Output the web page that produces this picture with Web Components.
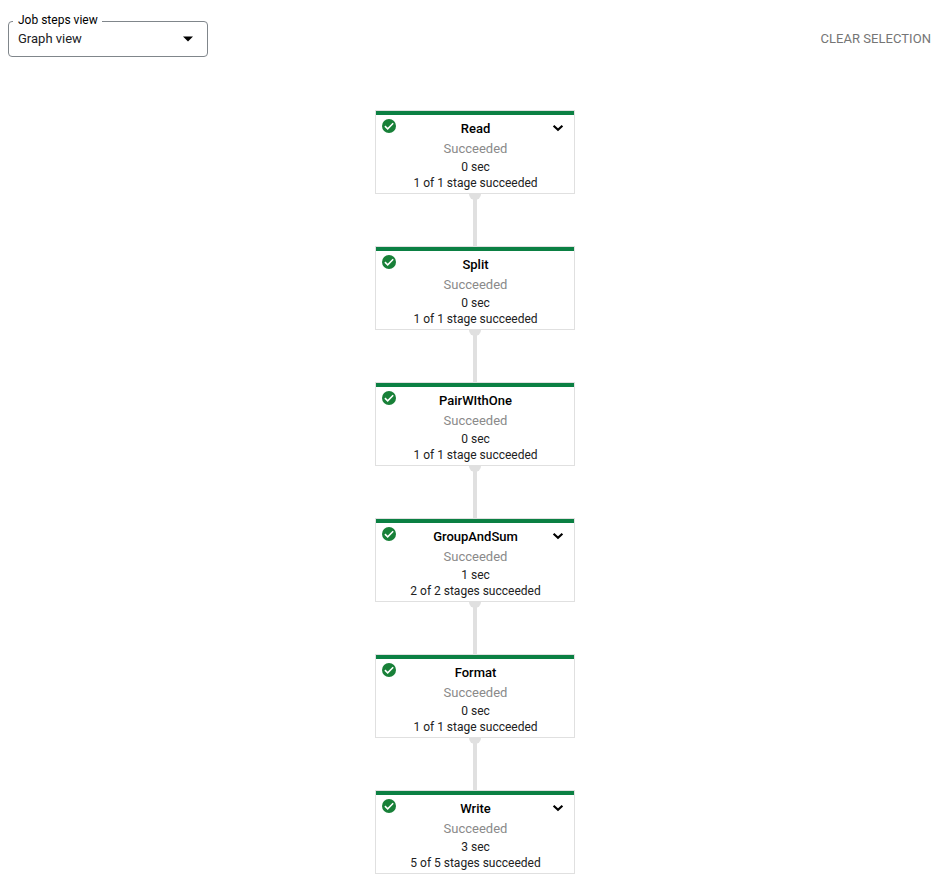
<!DOCTYPE html>
<html lang="en">
<head>
<meta charset="utf-8">
<title>Job steps</title>
<style>
body { margin: 0; background: #fff; font-family: Roboto, "Liberation Sans", sans-serif; color: #000; }
</style>
</head>
<body>
<job-page></job-page>
<script>
class BaseElement extends HTMLElement {
  constructor() {
    super();
    this.attachShadow({ mode: "open" });
  }
  connectedCallback() {
    this.shadowRoot.innerHTML = this.render();
  }
}

class ViewSelect extends BaseElement {
  render() {
    return `<style>
      :host { display: block; width: 200px; }
      fieldset { box-sizing: border-box; height: 44px; margin: 0; padding: 0 13px 0 9px; border: 1px solid #80868b; border-radius: 4px; min-width: 0; }
      legend { margin-left: -5px; padding: 0 4px 2px 5px; font-size: 12px; line-height: 14px; font-weight: 400; white-space: nowrap; }
      .value { display: flex; align-items: center; justify-content: space-between; height: 20px; font-size: 13px; line-height: 20px; color: #202124; }
      svg { display: block; }
    </style>
    <fieldset>
      <legend><slot name="label"></slot></legend>
      <div class="value"><slot></slot><svg width="12" height="6" viewBox="0 0 12 6"><path d="M1 0.5h10L6 5.5z" fill="#000"/></svg></div>
    </fieldset>`;
  }
}

class TextButton extends BaseElement {
  render() {
    return `<style>
      :host { display: block; font-size: 13px; line-height: 20px; letter-spacing: .05px; color: #757575; white-space: nowrap; }
    </style><slot></slot>`;
  }
}

class StepNode extends BaseElement {
  render() {
    const chevron = this.hasAttribute("expandable")
      ? `<svg class="chevron" width="12" height="8" viewBox="0 0 12 8"><path d="M1.6 1.7 6 5.8 10.4 1.7" fill="none" stroke="#000" stroke-width="2.15"/></svg>` : "";
    return `<style>
      :host { display: block; box-sizing: border-box; width: 200px; height: 84px; border: 1px solid #e0e0e0; background: #fff; text-align: center; }
      .bar { height: 4px; background: #0b8043; }
      .head { display: grid; grid-template-columns: 26px 1fr 26px; height: 24px; box-sizing: border-box; padding: 4px 0 0; }
      .check { margin-left: 6px; display: block; }
      .chevron { justify-self: start; margin: 5px 0 0 4px; display: block; }
      .name, .status, .line { padding-left: 1px; }
      .name { font-size: 13px; font-weight: 500; line-height: 20px; }
      .status { margin-top: 1px; font-size: 13px; line-height: 18px; color: #8a8a8a; }
      .line { font-size: 12px; line-height: 16px; color: #212121; }
      .time { margin-top: 1px; }
    </style>
    <div class="bar"></div>
    <div class="head">
      <svg class="check" width="14" height="14" viewBox="0 0 14 14"><circle cx="7" cy="7" r="7" fill="#188038"/><path d="M2.9 7.1 5.7 9.8 11.2 4.3" fill="none" stroke="#fff" stroke-width="1.6"/></svg>
      <div class="name"><slot></slot></div>${chevron}
    </div>
    <div class="status">Succeeded</div>
    <div class="line time">${this.getAttribute("time")}</div>
    <div class="line">${this.getAttribute("stages")} succeeded</div>`;
  }
}

class StepLink extends BaseElement {
  render() {
    return `<style>:host, svg { display: block; }</style>
    <svg width="12" height="52" viewBox="0 0 12 52" fill="#e0e0e0"><path d="M0 0a6 6 0 0 0 12 0z"/><rect x="4" width="4" height="52"/></svg>`;
  }
}

class StepGraph extends BaseElement {
  render() {
    return `<style>:host { display: flex; flex-direction: column; align-items: center; }</style><slot></slot>`;
  }
}

class JobPage extends BaseElement {
  render() {
    return `<style>
      :host { display: block; height: 884px; overflow: hidden; }
      header { display: flex; justify-content: space-between; align-items: flex-start; height: 110px; box-sizing: border-box; padding: 13px 21px 0 8px; }
      text-button { margin-top: 16px; }
      step-graph { width: 950px; }
    </style>
    <header>
      <view-select><span slot="label">Job steps view</span>Graph view</view-select>
      <text-button>CLEAR SELECTION</text-button>
    </header>
    <step-graph>
      <step-node expandable time="0 sec" stages="1 of 1 stage">Read</step-node>
      <step-link></step-link>
      <step-node time="0 sec" stages="1 of 1 stage">Split</step-node>
      <step-link></step-link>
      <step-node time="0 sec" stages="1 of 1 stage">PairWIthOne</step-node>
      <step-link></step-link>
      <step-node expandable time="1 sec" stages="2 of 2 stages">GroupAndSum</step-node>
      <step-link></step-link>
      <step-node time="0 sec" stages="1 of 1 stage">Format</step-node>
      <step-link></step-link>
      <step-node expandable time="3 sec" stages="5 of 5 stages">Write</step-node>
    </step-graph>`;
  }
}

customElements.define("view-select", ViewSelect);
customElements.define("text-button", TextButton);
customElements.define("step-node", StepNode);
customElements.define("step-link", StepLink);
customElements.define("step-graph", StepGraph);
customElements.define("job-page", JobPage);
</script>
</body>
</html>
